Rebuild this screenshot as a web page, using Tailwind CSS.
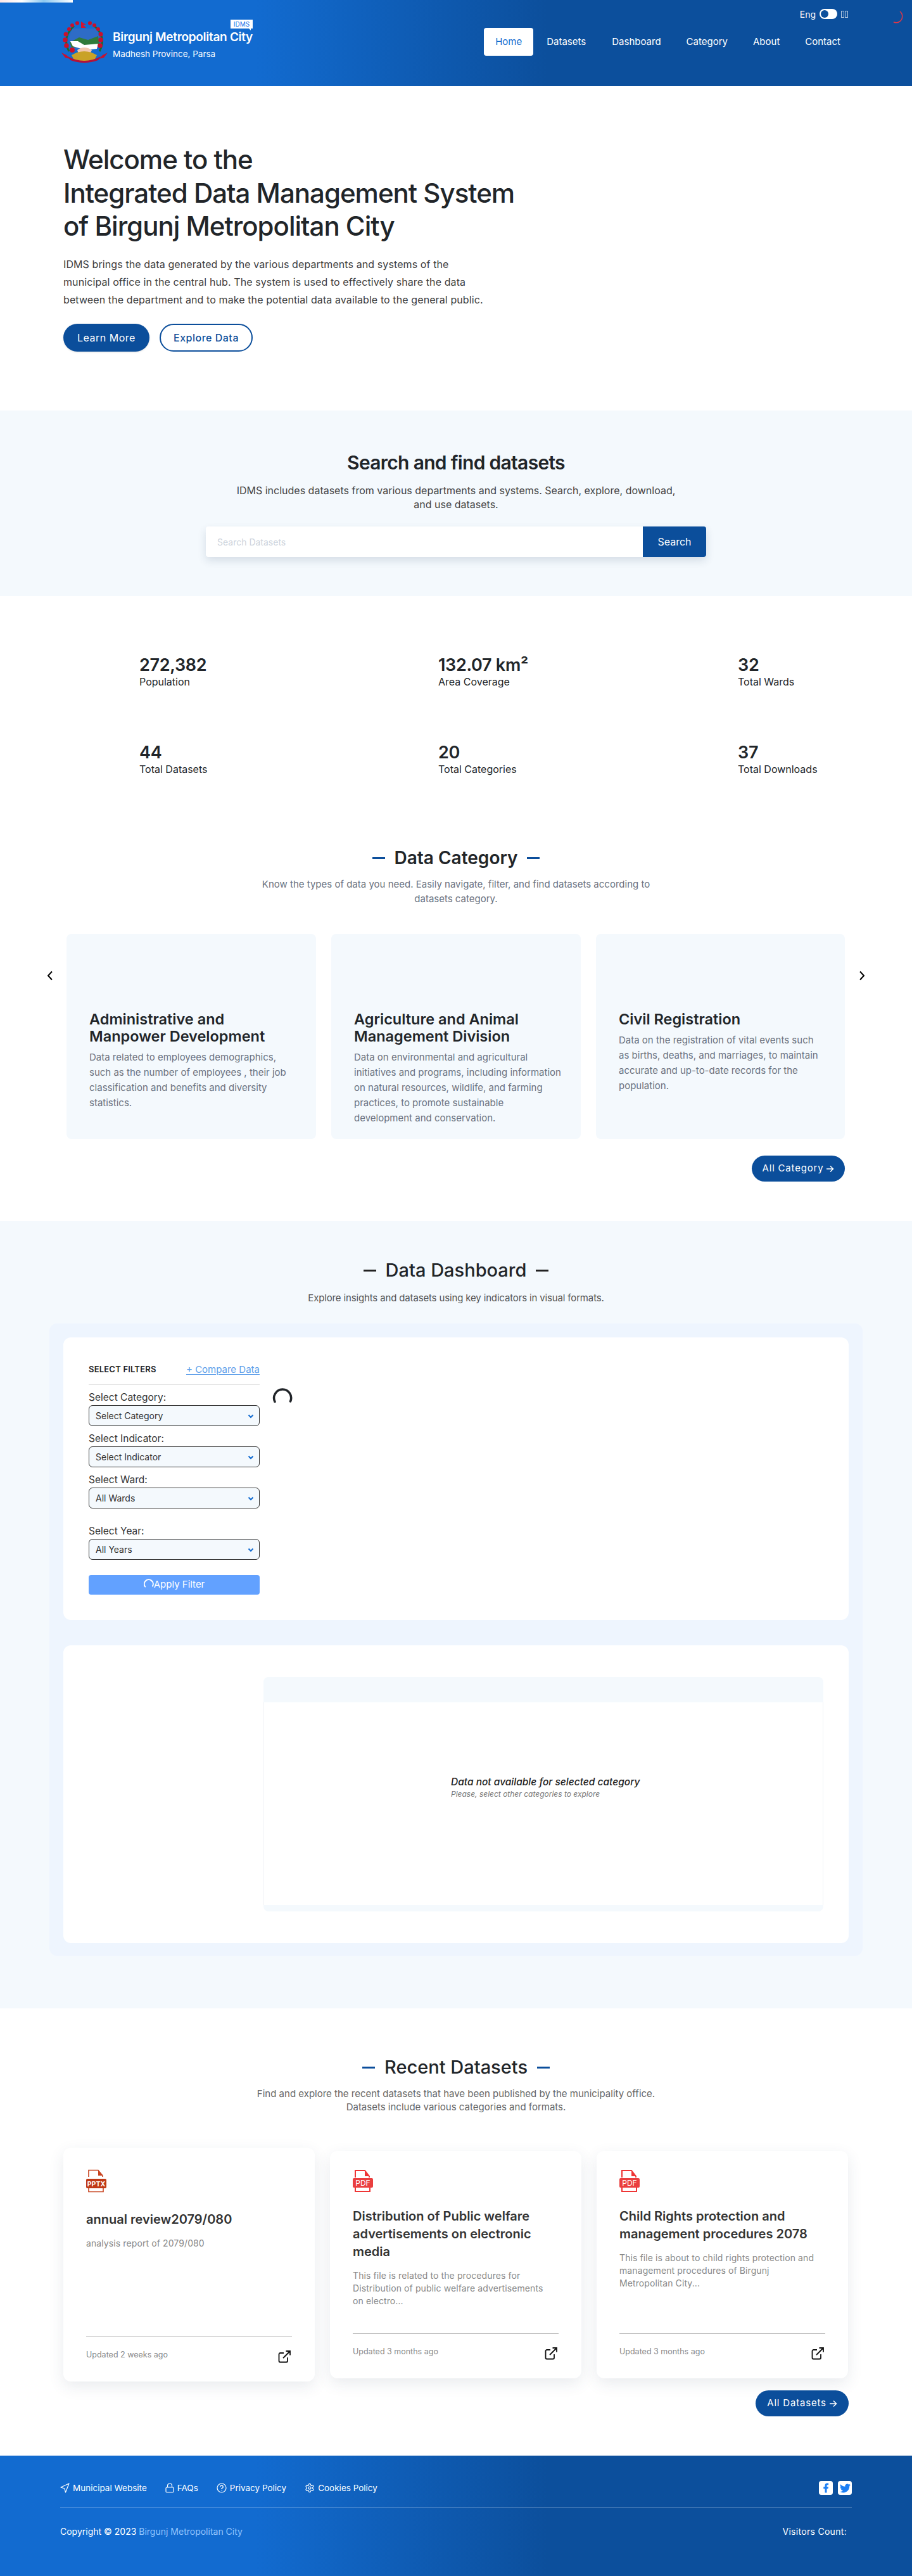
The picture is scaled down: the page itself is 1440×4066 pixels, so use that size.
<!DOCTYPE html>
<html>
<head>
<meta charset="utf-8">
<title>Birgunj Metropolitan City IDMS</title>
<script src="https://cdn.jsdelivr.net/npm/@tailwindcss/browser@4"></script>
</head>
<body class="bg-white">
<div class="relative w-[1440px] h-[4066px] overflow-hidden text-[#212529] font-['Inter','Roboto',sans-serif]">

  <!-- page loading bar + spinner -->
  <div class="absolute top-0 left-0 w-[115px] h-[4px] bg-[linear-gradient(90deg,#fde8e8,#ffffff_30%,#8cc8f0_60%,#ffffff)]"></div>
  <svg class="absolute left-[1404px] top-[16px]" width="22" height="22" viewBox="0 0 22 22" fill="none"><path d="M17.5 2.500a10 10 0 0 1-1 15.500 9.500 9.500 0 0 1-9 1" stroke="#d9384a" stroke-width="1.600" stroke-linecap="round"/></svg>

  <!-- Header -->
  <header class="h-[136px] flex justify-between pl-[95px] pr-[113px] text-white bg-[linear-gradient(90deg,#126bd0_28%,#0c4f9c_60%)]">
    <div class="flex pt-[33px]">
      <svg width="77" height="66" viewBox="0 0 77 66">
        <path d="M2 50 L10 54 L16 60 L8 58Z M75 50 L67 54 L61 60 L69 58Z" fill="#c8102e"/>
        <g fill="none" stroke="#1c6b2c" stroke-width="3"><path d="M14 48 Q2 26 22 8"/><path d="M62 48 Q74 26 54 8"/></g>
        <path d="M20 12 L56 12 Q66 26 58 44 L18 44 Q10 26 20 12Z" fill="#2e6cc6"/>
        <path d="M15 34 L30 26 L44 30 L60 24 L62 38 L18 42Z" fill="#2f7a3a"/>
        <path d="M16 32 L28 32 L38 38 L60 36 L58 44 L40 46 L20 40Z" fill="#ffffff"/>
        <path d="M27 46 Q38 38 50 46 L46 54 L30 54Z" fill="#f2c7ae"/>
        <path d="M18 54 Q38 42 58 54 L54 62 Q38 68 22 62Z" fill="#c9a227"/>
        <path d="M12 56 Q38 70 64 56 L60 62 Q38 70 16 62Z" fill="#b3123a"/>
        <path d="M33 1 L41 6 L36 6 L41 11 L33 11Z" fill="#d6132f"/>
        <g fill="#c8102e">
          <circle cx="27" cy="3.500" r="3"/><circle cx="47" cy="3.500" r="3"/><circle cx="19" cy="7" r="3"/><circle cx="54" cy="7" r="3"/><circle cx="14" cy="13" r="3"/><circle cx="60" cy="13" r="3"/>
          <circle cx="9" cy="21" r="3.500"/><circle cx="64" cy="21" r="3.500"/><circle cx="8" cy="30" r="3.800"/><circle cx="64" cy="30" r="3.800"/><circle cx="10" cy="39" r="3.800"/><circle cx="63" cy="39" r="3.800"/><circle cx="19" cy="46" r="4"/>
        </g>
      </svg>
      <div class="relative pl-[6px] pt-[14px]">
        <div class="text-[19px] leading-[24px] font-semibold whitespace-nowrap tracking-[-0.3px]">Birgunj Metropolitan City</div>
        <div class="text-[13.5px] leading-[20px] mt-[4px] whitespace-nowrap">Madhesh Province, Parsa</div>
        <span class="absolute left-[192px] top-[-2px] w-[35px] h-[14px] bg-white text-[#1a73e8] text-[10px] leading-[14px] text-center">IDMS</span>
        <span class="absolute left-[221px] top-[12px] w-0 h-0 border-t-[3px] border-t-white border-l-[3px] border-l-transparent"></span>
      </div>
    </div>
    <div class="pt-[14px] flex flex-col items-end">
      <div class="h-[16px] flex items-center -mr-[12px] text-[14px]">
        <span>Eng</span>
        <span class="ml-[6px] w-[28px] h-[16px] rounded-full bg-white flex items-center pl-[2px]"><span class="w-[12px] h-[12px] rounded-full bg-[#0c4f9c]"></span></span>
        <span class="ml-[6px] flex gap-[1px]"><span class="w-[5px] h-[11px] border border-white/70"></span><span class="w-[5px] h-[11px] border border-white/70"></span></span>
      </div>
      <nav class="mt-[14px] flex items-center text-[15px]">
        <a class="h-[44px] px-[18px] rounded-[4px] bg-white text-[#126bd0] flex items-center">Home</a>
        <a class="h-[44px] px-[21px] flex items-center">Datasets</a>
        <a class="h-[44px] px-[20px] flex items-center">Dashboard</a>
        <a class="h-[44px] px-[20px] flex items-center">Category</a>
        <a class="h-[44px] px-[20px] flex items-center">About</a>
        <a class="h-[44px] pl-[20px] flex items-center">Contact</a>
      </nav>
    </div>
  </header>

  <!-- Hero -->
  <section class="h-[512px] pl-[100px] pt-[90px]">
    <h1 class="text-[42px] leading-[52.5px] font-medium tracking-[-1px] whitespace-nowrap">Welcome to the<br>Integrated Data Management System<br>of Birgunj Metropolitan City</h1>
    <p class="mt-[19px] text-[16px] leading-[28px] tracking-[0.1px] text-[#3d3d3d] whitespace-nowrap">IDMS brings the data generated by the various departments and systems of the<br>municipal office in the central hub. The system is used to effectively share the data<br>between the department and to make the potential data available to the general public.</p>
    <div class="mt-[24px] flex gap-[16px]">
      <a class="w-[136px] h-[44px] rounded-full bg-[#0b4e9b] text-white text-[16px] tracking-[0.5px] flex items-center justify-center shadow-sm">Learn More</a>
      <a class="w-[147px] h-[44px] rounded-full border-2 border-[#0b4e9b] text-[#0b4e9b] text-[16px] font-medium tracking-[0.5px] flex items-center justify-center">Explore Data</a>
    </div>
  </section>

  <!-- Search -->
  <section class="h-[293px] bg-[#f4f9fd] pt-[62px] flex flex-col items-center">
    <h2 class="text-[30px] leading-[40px] font-semibold tracking-[-0.7px]">Search and find datasets</h2>
    <p class="mt-[13px] w-[720px] text-center text-[16px] leading-[22px] text-[#444]">IDMS includes datasets from various departments and systems. Search, explore, download, and use datasets.</p>
    <div class="mt-[24px] w-[790px] h-[48px] flex rounded-[4px] bg-white shadow-[0_6px_14px_rgba(30,60,90,0.14)]">
      <input class="flex-1 px-[18px] text-[14px] outline-none placeholder:text-[#cdd3dc]" placeholder="Search Datasets">
      <button class="w-[100px] rounded-r-[4px] bg-[#0b4e9b] text-white text-[16px]">Search</button>
    </div>
  </section>

  <!-- Stats -->
  <section class="pl-[220px] pt-[95px] grid grid-cols-[472px_473px_auto] gap-y-[86px]">
    <div><div class="text-[27px] leading-[28px] font-semibold tracking-[-0.3px]">272,382</div><div class="text-[16px] leading-[24px]">Population</div></div>
    <div><div class="text-[27px] leading-[28px] font-semibold tracking-[-0.3px]">132.07 km²</div><div class="text-[16px] leading-[24px]">Area Coverage</div></div>
    <div><div class="text-[27px] leading-[28px] font-semibold tracking-[-0.3px]">32</div><div class="text-[16px] leading-[24px]">Total Wards</div></div>
    <div><div class="text-[27px] leading-[28px] font-semibold tracking-[-0.3px]">44</div><div class="text-[16px] leading-[24px]">Total Datasets</div></div>
    <div><div class="text-[27px] leading-[28px] font-semibold tracking-[-0.3px]">20</div><div class="text-[16px] leading-[24px]">Total Categories</div></div>
    <div><div class="text-[27px] leading-[28px] font-semibold tracking-[-0.3px]">37</div><div class="text-[16px] leading-[24px]">Total Downloads</div></div>
  </section>

  <!-- Data Category -->
  <section class="relative h-[701px] pt-[110px]">
    <div class="flex items-center justify-center gap-[15px]">
      <span class="w-[20px] h-[3px] bg-[#0b4e9b]"></span>
      <h2 class="text-[28px] leading-[36px] font-semibold">Data Category</h2>
      <span class="w-[20px] h-[3px] bg-[#0b4e9b]"></span>
    </div>
    <p class="mt-[12px] mx-auto w-[640px] text-center text-[15px] leading-[23px] text-[#6b7280]">Know the types of data you need. Easily navigate, filter, and find datasets according to<br>datasets category.</p>
    <div class="mt-[44px] ml-[105px] flex gap-[24px]">
      <div class="w-[394px] h-[324px] rounded-[8px] bg-[#f4f9fd] pl-[36px] pt-[121px]">
        <h3 class="text-[23.5px] leading-[27px] font-semibold">Administrative and<br>Manpower Development</h3>
        <p class="mt-[8px] text-[15px] leading-[24px] text-[#6b7280] whitespace-nowrap">Data related to employees demographics,<br>such as the number of employees , their job<br>classification and benefits and diversity<br>statistics.</p>
      </div>
      <div class="w-[394px] h-[324px] rounded-[8px] bg-[#f4f9fd] pl-[36px] pt-[121px]">
        <h3 class="text-[23.5px] leading-[27px] font-semibold">Agriculture and Animal<br>Management Division</h3>
        <p class="mt-[8px] text-[15px] leading-[24px] text-[#6b7280] whitespace-nowrap">Data on environmental and agricultural<br>initiatives and programs, including information<br>on natural resources, wildlife, and farming<br>practices, to promote sustainable<br>development and conservation.</p>
      </div>
      <div class="w-[393px] h-[324px] rounded-[8px] bg-[#f4f9fd] pl-[36px] pt-[121px]">
        <h3 class="text-[23.5px] leading-[27px] font-semibold">Civil Registration</h3>
        <p class="mt-[8px] text-[15px] leading-[24px] text-[#6b7280] whitespace-nowrap">Data on the registration of vital events such<br>as births, deaths, and marriages, to maintain<br>accurate and up-to-date records for the<br>population.</p>
      </div>
    </div>
    <svg class="absolute left-[74px] top-[306px]" width="10" height="16" viewBox="0 0 10 16" fill="none"><path d="M8 1.500 2 8l6 6.500" stroke="#000" stroke-width="2"/></svg>
    <svg class="absolute left-[1356px] top-[306px]" width="10" height="16" viewBox="0 0 10 16" fill="none"><path d="M2 1.500 8 8l-6 6.500" stroke="#000" stroke-width="2"/></svg>
    <div class="mt-[26px] pr-[106px] flex justify-end">
      <a class="w-[147px] h-[41px] rounded-full bg-[#0b4e9b] text-white text-[15px] tracking-[0.8px] flex items-center justify-center gap-[4px]">All Category
        <svg width="13" height="12" viewBox="0 0 13 12" fill="none"><path d="M1 6h10M7 1.500 11.500 6 7 10.500" stroke="#fff" stroke-width="1.500"/></svg>
      </a>
    </div>
  </section>

  <!-- Data Dashboard -->
  <section class="h-[1243px] bg-[#f4f9fd] pt-[58px]">
    <div class="flex items-center justify-center gap-[15px]">
      <span class="w-[20px] h-[3px] bg-[#222]"></span>
      <h2 class="text-[29px] leading-[40px] font-medium">Data Dashboard</h2>
      <span class="w-[20px] h-[3px] bg-[#222]"></span>
    </div>
    <p class="mt-[12px] text-center text-[15px] tracking-[-0.15px] leading-[24px] text-[#555]">Explore insights and datasets using key indicators in visual formats.</p>
    <div class="mt-[28px] mx-[78px] h-[998px] rounded-[12px] bg-[#eef5fe] px-[22px] pt-[22px]">
      <div class="relative h-[446px] rounded-[12px] bg-white pl-[40px] pt-[40px]">
        <div class="w-[270px]">
          <div class="flex justify-between items-center h-[24px] pb-[2px]">
            <span class="text-[13px] font-semibold tracking-[0.2px] text-[#222]">SELECT FILTERS</span>
            <a class="text-[15px] text-[#60a0ea] underline underline-offset-[2px]">+ Compare Data</a>
          </div>
          <div class="mt-[10px] h-[1px] bg-[#e2e2e2]"></div>

          <label class="block mt-[9px] text-[15.5px] leading-[22px] text-[#333]">Select Category:</label>
          <div class="relative h-[33px] mt-[1px] rounded-[6px] border border-[#333] bg-[#f4f9fd] flex items-center pl-[10px] text-[14px] text-[#333]">Select Category
            <svg class="absolute right-[8px] top-[13px]" width="10" height="7" viewBox="0 0 10 7" fill="none"><path d="M1.500 1.500 5 5l3.500-3.500" stroke="#126bd0" stroke-width="2"/></svg>
          </div>
          <label class="block mt-[9px] text-[15.5px] leading-[22px] text-[#333]">Select Indicator:</label>
          <div class="relative h-[33px] mt-[1px] rounded-[6px] border border-[#333] bg-[#f4f9fd] flex items-center pl-[10px] text-[14px] text-[#333]">Select Indicator
            <svg class="absolute right-[8px] top-[13px]" width="10" height="7" viewBox="0 0 10 7" fill="none"><path d="M1.500 1.500 5 5l3.500-3.500" stroke="#126bd0" stroke-width="2"/></svg>
          </div>
          <label class="block mt-[9px] text-[15.5px] leading-[22px] text-[#333]">Select Ward:</label>
          <div class="relative h-[33px] mt-[1px] rounded-[6px] border border-[#333] bg-[#f4f9fd] flex items-center pl-[10px] text-[14px] text-[#333]">All Wards
            <svg class="absolute right-[8px] top-[13px]" width="10" height="7" viewBox="0 0 10 7" fill="none"><path d="M1.500 1.500 5 5l3.500-3.500" stroke="#126bd0" stroke-width="2"/></svg>
          </div>
          <label class="block mt-[25px] text-[15.5px] leading-[22px] text-[#333]">Select Year:</label>
          <div class="relative h-[33px] mt-[1px] rounded-[6px] border border-[#333] bg-[#f4f9fd] flex items-center pl-[10px] text-[14px] text-[#333]">All Years
            <svg class="absolute right-[8px] top-[13px]" width="10" height="7" viewBox="0 0 10 7" fill="none"><path d="M1.500 1.500 5 5l3.500-3.500" stroke="#126bd0" stroke-width="2"/></svg>
          </div>
          <button class="mt-[24px] w-full h-[31px] rounded-[4px] bg-[#62a1ff] text-white text-[15px] flex items-center justify-center">
            <svg width="16" height="16" viewBox="0 0 16 16" fill="none" class="-mt-[3px]"><path d="M2.200 12.500A7 7 0 1 1 14 11.500" stroke="#fff" stroke-width="2" stroke-linecap="round"/></svg>
            Apply Filter
          </button>
        </div>
        <svg class="absolute left-[330px] top-[75px]" width="32" height="28" viewBox="0 0 32 28" fill="none"><path d="M4 26.500A13.500 13.500 0 1 1 28.500 26" stroke="#212529" stroke-width="3.500" stroke-linecap="round"/></svg>
      </div>
      <div class="mt-[40px] h-[470px] rounded-[12px] bg-white pl-[316px] pr-[40px] pt-[50px]">
        <div class="h-[370px] rounded-[8px] bg-[#f4f9fd] pt-[40px] pb-[10px]">
          <div class="h-[320px] bg-white border-x border-[#f0f3f6] pl-[295px] pt-[115px]">
            <div class="text-[15.5px] leading-[22px] italic font-medium text-[#222] whitespace-nowrap">Data not available for selected category</div>
            <div class="text-[12px] leading-[15px] italic text-[#777] whitespace-nowrap">Please, select other categories to explore</div>
          </div>
        </div>
      </div>
    </div>
  </section>

  <!-- Recent Datasets -->
  <section class="relative h-[706px] pt-[73px]">
    <div class="flex items-center justify-center gap-[15px]">
      <span class="w-[20px] h-[3px] bg-[#0b4e9b]"></span>
      <h2 class="text-[29px] leading-[40px] font-medium">Recent Datasets</h2>
      <span class="w-[20px] h-[3px] bg-[#0b4e9b]"></span>
    </div>
    <p class="mt-[11px] text-center text-[15px] leading-[21px] text-[#666]">Find and explore the recent datasets that have been published by the municipality office.<br>Datasets include various categories and formats.</p>
    <div class="mt-[54px] ml-[100px] w-[1240px] flex items-center gap-[24px]">

      <div class="w-[397px] h-[369px] rounded-[12px] bg-white shadow-[0_8px_24px_rgba(40,60,90,0.10)] px-[36px] pt-[34px] flex flex-col">
        <svg width="32" height="37" viewBox="0 0 32 37" fill="none">
          <path d="M4 12V1.500h15L26 10v2M4 30v5.500h23V30" stroke="#c8431f" stroke-width="1.600"/><path d="M19 1.500V10h7Z" fill="#c8431f"/>
          <rect x="0" y="15" width="32" height="15" rx="2" fill="#c03a16"/>
          <text x="16" y="26.500" text-anchor="middle" font-size="10.500" font-weight="700" fill="#fff" font-family="Inter">PPTX</text>
        </svg>
        <h3 class="mt-[28px] text-[20px] leading-[28px] font-semibold text-[#333]">annual review2079/080</h3>
        <p class="mt-[14px] text-[14px] leading-[20px] tracking-[0.1px] text-[#888]">analysis report of 2079/080</p>
        <div class="mt-auto border-t border-[#b0b0b0] h-[71px] flex justify-between items-center pb-[14px]">
          <span class="text-[12.5px] text-[#888]">Updated 2 weeks ago</span>
          <svg class="mr-[2px] mt-[6px]" width="20" height="20" viewBox="0 0 20 20" fill="none"><path d="M9 4H3.500A2 2 0 0 0 1.500 6v10.500a2 2 0 0 0 2 2H13a2 2 0 0 0 2-2V11M8 12 19 1M12.500 1H19v6.500" stroke="#111" stroke-width="1.800"/></svg>
        </div>
      </div>

      <div class="w-[397px] h-[359px] rounded-[12px] bg-white shadow-[0_8px_24px_rgba(40,60,90,0.10)] px-[36px] pt-[30px] flex flex-col">
        <svg width="32" height="35" viewBox="0 0 32 35" fill="none">
          <path d="M4 12V1h15l7 9v2M4 28v6h23v-6" stroke="#ef3535" stroke-width="2"/><path d="M19 1v9h7Z" fill="#ef3535"/>
          <rect x="0" y="13" width="32" height="15" rx="2" fill="#ea3f3f"/>
          <text x="16" y="25" text-anchor="middle" font-size="12" fill="#fff" font-family="Inter">PDF</text>
        </svg>
        <h3 class="mt-[24px] text-[20px] leading-[28px] font-semibold text-[#333]">Distribution of Public welfare advertisements on electronic media</h3>
        <p class="mt-[14px] text-[14px] leading-[20px] tracking-[0.1px] text-[#888] whitespace-nowrap">This file is related to the procedures for<br>Distribution of public welfare advertisements<br>on electro...</p>
        <div class="mt-auto border-t border-[#b0b0b0] h-[71px] flex justify-between items-center pb-[14px]">
          <span class="text-[12.5px] text-[#888]">Updated 3 months ago</span>
          <svg class="mr-[2px] mt-[6px]" width="20" height="20" viewBox="0 0 20 20" fill="none"><path d="M9 4H3.500A2 2 0 0 0 1.500 6v10.500a2 2 0 0 0 2 2H13a2 2 0 0 0 2-2V11M8 12 19 1M12.500 1H19v6.500" stroke="#111" stroke-width="1.800"/></svg>
        </div>
      </div>

      <div class="w-[397px] h-[359px] rounded-[12px] bg-white shadow-[0_8px_24px_rgba(40,60,90,0.10)] px-[36px] pt-[30px] flex flex-col">
        <svg width="32" height="35" viewBox="0 0 32 35" fill="none">
          <path d="M4 12V1h15l7 9v2M4 28v6h23v-6" stroke="#ef3535" stroke-width="2"/><path d="M19 1v9h7Z" fill="#ef3535"/>
          <rect x="0" y="13" width="32" height="15" rx="2" fill="#ea3f3f"/>
          <text x="16" y="25" text-anchor="middle" font-size="12" fill="#fff" font-family="Inter">PDF</text>
        </svg>
        <h3 class="mt-[24px] text-[20px] leading-[28px] font-semibold text-[#333]">Child Rights protection and management procedures 2078</h3>
        <p class="mt-[14px] text-[14px] leading-[20px] tracking-[0.1px] text-[#888] whitespace-nowrap">This file is about to child rights protection and<br>management procedures of Birgunj<br>Metropolitan City...</p>
        <div class="mt-auto border-t border-[#b0b0b0] h-[71px] flex justify-between items-center pb-[14px]">
          <span class="text-[12.5px] text-[#888]">Updated 3 months ago</span>
          <svg class="mr-[2px] mt-[6px]" width="20" height="20" viewBox="0 0 20 20" fill="none"><path d="M9 4H3.500A2 2 0 0 0 1.500 6v10.500a2 2 0 0 0 2 2H13a2 2 0 0 0 2-2V11M8 12 19 1M12.500 1H19v6.500" stroke="#111" stroke-width="1.800"/></svg>
        </div>
      </div>
    </div>
    <div class="mt-[14px] pr-[100px] flex justify-end">
      <a class="w-[147px] h-[41px] rounded-full bg-[#0b4e9b] text-white text-[15px] tracking-[0.8px] flex items-center justify-center gap-[4px]">All Datasets
        <svg width="13" height="12" viewBox="0 0 13 12" fill="none"><path d="M1 6h10M7 1.500 11.500 6 7 10.500" stroke="#fff" stroke-width="1.500"/></svg>
      </a>
    </div>
  </section>

  <!-- Footer -->
  <footer class="h-[190px] px-[95px] text-white bg-[linear-gradient(90deg,#126bd0_28%,#0c4f9c_60%)]">
    <div class="h-[82px] flex justify-between items-start pt-[40px] border-b border-white/30">
      <div class="h-[22px] flex items-center text-[13.5px] gap-[29px]">
        <a class="flex items-center gap-[5px]"><svg width="15" height="16" viewBox="0 0 15 16" fill="none"><path d="M14 1 1 7l6 2 1.500 6Z" stroke="#fff" stroke-width="1.200" stroke-linejoin="round"/></svg>Municipal Website</a>
        <a class="flex items-center gap-[5px]"><svg width="14" height="16" viewBox="0 0 14 16" fill="none"><rect x="1" y="7" width="12" height="8" rx="1.500" stroke="#fff" stroke-width="1.200"/><path d="M3.500 7V4.500a3.500 3.500 0 0 1 7 0V7" stroke="#fff" stroke-width="1.200"/></svg>FAQs</a>
        <a class="flex items-center gap-[5px]"><svg width="16" height="16" viewBox="0 0 16 16" fill="none"><circle cx="8" cy="8" r="7" stroke="#fff" stroke-width="1.200"/><path d="M5.800 6.200A2.200 2.200 0 1 1 8 8.500V10M8 11.500v1" stroke="#fff" stroke-width="1.200"/></svg>Privacy Policy</a>
        <a class="flex items-center gap-[5px]"><svg width="16" height="16" viewBox="0 0 24 24" fill="none" stroke="#fff" stroke-width="1.800"><path d="M12.200 2h-.4a2 2 0 0 0-2 2v.2a2 2 0 0 1-1 1.700l-.4.300a2 2 0 0 1-2 0l-.2-.1a2 2 0 0 0-2.700.7l-.2.400a2 2 0 0 0 .7 2.700l.2.100a2 2 0 0 1 1 1.700v.500a2 2 0 0 1-1 1.700l-.2.100a2 2 0 0 0-.7 2.700l.2.400a2 2 0 0 0 2.700.7l.2-.1a2 2 0 0 1 2 0l.4.300a2 2 0 0 1 1 1.700v.2a2 2 0 0 0 2 2h.4a2 2 0 0 0 2-2v-.2a2 2 0 0 1 1-1.700l.4-.3a2 2 0 0 1 2 0l.2.100a2 2 0 0 0 2.700-.7l.2-.4a2 2 0 0 0-.7-2.700l-.2-.1a2 2 0 0 1-1-1.700v-.500a2 2 0 0 1 1-1.700l.2-.1a2 2 0 0 0 .7-2.700l-.2-.4a2 2 0 0 0-2.700-.7l-.2.100a2 2 0 0 1-2 0l-.4-.3a2 2 0 0 1-1-1.700V4a2 2 0 0 0-2-2Z"/><circle cx="12" cy="12" r="3"/></svg>Cookies Policy</a>
      </div>
      <div class="flex gap-[8px]">
        <span class="w-[22px] h-[22px] rounded-[4px] bg-white flex items-center justify-center"><svg width="18" height="18" viewBox="0 0 24 24" fill="#1a7ef5"><path d="M14 13.500h2.500l1-4H14v-2c0-1.030 0-2 2-2h1.500V2.140c-.326-.043-1.557-.14-2.857-.14C11.928 2 10 3.657 10 6.700v2.800H7v4h3V22h4v-8.500z"/></svg></span>
        <span class="w-[22px] h-[22px] rounded-[4px] bg-white flex items-center justify-center"><svg width="17" height="17" viewBox="0 0 24 24" fill="#1a7ef5"><path d="M23.953 4.570a10 10 0 01-2.825.775 4.958 4.958 0 002.163-2.723c-.951.555-2.005.959-3.127 1.184a4.920 4.920 0 00-8.384 4.482C7.690 8.095 4.067 6.130 1.640 3.162a4.822 4.822 0 00-.666 2.475c0 1.710.870 3.213 2.188 4.096a4.904 4.904 0 01-2.228-.616v.060a4.923 4.923 0 003.946 4.827 4.996 4.996 0 01-2.212.085 4.936 4.936 0 004.604 3.417 9.867 9.867 0 01-6.102 2.105c-.390 0-.779-.023-1.170-.067a13.995 13.995 0 007.557 2.209c9.053 0 13.998-7.496 13.998-13.985 0-.210 0-.420-.015-.630A9.935 9.935 0 0024 4.590z"/></svg></span>
      </div>
    </div>
    <div class="h-[74px] pr-[8px] flex justify-between items-center text-[14px]">
      <span>Copyright © 2023 <a class="text-[#93c5fd]">Birgunj Metropolitan City</a></span>
      <span class="tracking-[0.3px]">Visitors Count:</span>
    </div>
  </footer>
</div>
</body>
</html>
